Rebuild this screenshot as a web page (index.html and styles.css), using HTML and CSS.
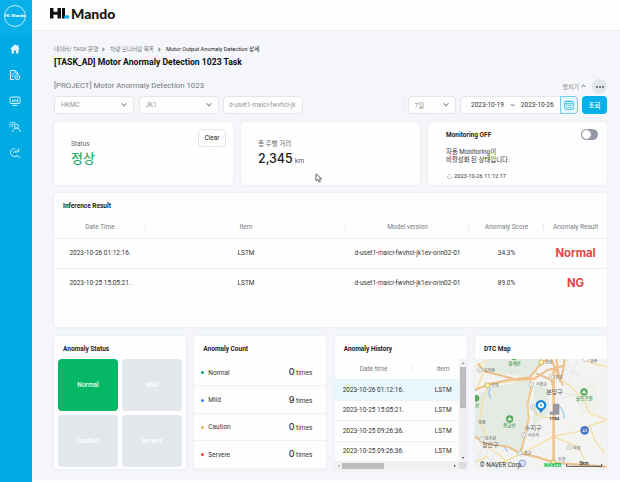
FILE: index.html
```html
<!DOCTYPE html>
<html lang="ko">
<head>
  <meta charset="UTF-8">
  <meta name="viewport" content="width=device-width, initial-scale=1.0">
  <title>HL Mando - Motor Anomaly Detection</title>
  <link rel="stylesheet" href="styles.css">
</head>
<body>
  <nav class="sidebar">
    <div class="side-logo"><span>HL Mando</span></div>
    <a class="side-item"><svg width="12" height="12" viewBox="0 0 12 12"><path d="M6 1.2 1 6h1.5v4.5h2.4V7.4h2.2v3.1h2.4V6H11L9.5 4.5V2H8.3v1.3z" fill="#e6f8ff"/></svg></a>
    <a class="side-item"><svg width="12" height="12" viewBox="0 0 12 12" fill="none" stroke="#d5f2fd" stroke-width="1"><path d="M5 10.5H1.5v-9h4.7L8.7 4v1M6 1.5V4h2.7M3 5h2M3 7h1.5"/><circle cx="8.3" cy="8.2" r="2.5"/><circle cx="8.3" cy="8.2" r=".7"/></svg></a>
    <a class="side-item"><svg width="12" height="12" viewBox="0 0 12 12" fill="none" stroke="#d5f2fd" stroke-width="1"><rect x="1" y="2" width="10" height="6.5" rx="1"/><path d="M3.5 7V5.2M5.2 7V4M7 7V5M8.6 7V3.8M3.7 10.4h4.6"/></svg></a>
    <a class="side-item"><svg width="12" height="12" viewBox="0 0 12 12" fill="none" stroke="#d5f2fd" stroke-width="1"><circle cx="7.4" cy="5.1" r="2"/><path d="M3.5 11c.3-2.3 1.7-3.7 3.9-3.7S11 8.7 11.4 11M.5 1.7h1M2.5 1.7h4M.5 3.5h1M2.5 3.5h2M.5 5.3h1M2.5 5.3h1.5"/></svg></a>
    <a class="side-item"><svg width="12" height="12" viewBox="0 0 12 12" fill="none" stroke="#d5f2fd" stroke-width="1"><path d="M6 1.700C3.500 1.200 1.500 3 1.500 5.500S3.500 9.500 5.800 9.500c1.200 0 2.200-.5 2.900-1.500M8.300 8l2.700 3M6 9.500h2M4.500 5.800V4.500M6.200 5.800V3.500M8 5.800V3.200M9.700 5V1.800"/></svg></a>
  </nav>
  <div class="page">
    <header class="header">
      <svg class="brand-mark" width="20" height="11" viewBox="0 0 20 11"><path d="M0 0h3.500v3.700h4V0H11v10.500H7.500V6.700h-4v3.800H0zM12 0h3v10.500h-3z" fill="#111"/><path d="M15 7.200h4.300v3.300H13.500z" fill="#12b5ea"/></svg>
      <span class="brand-name">Mando</span>
    </header>
    <main class="content">
      <div class="breadcrumb">
        <span class="crumb">데이터/ TASK 운영</span><i class="sep"></i><span class="crumb">차량 모니터링 목록</span><i class="sep"></i><span class="now">Motor Output Anomaly Detection 상세</span>
      </div>
      <h1>[TASK_AD] Motor Anormaly Detection 1023 Task</h1>
      <div class="project-row">
        <span class="project">[PROJECT] Motor Anormaly Detection 1023</span>
        <span class="fold">펼치기<i class="up"></i></span>
        <button class="more"><i></i><i></i><i></i></button>
      </div>
      <div class="filters">
        <div class="select">HKMC<i class="down"></i></div>
        <div class="select">JK1<i class="down"></i></div>
        <div class="select device">d-uset1-maici-fwvhcl-jk</div>
        <div class="divider"></div>
        <div class="select days">7일<i class="down"></i></div>
        <div class="dates">
          <span>2023-10-19</span><span>~</span><span>2023-10-26</span>
          <div class="calendar"><svg width="10" height="10" viewBox="0 0 10 10" fill="none" stroke="#23b5dc" stroke-width=".8"><rect x=".7" y="1.5" width="8.6" height="7.8" rx=".7"/><path d="M.7 3.7h8.6M2.7.3v2M5 .3v2M7.3.3v2"/><path d="M2.2 5.3h5.8M2.2 7.4h5.8" stroke-dasharray="1.2 .9" stroke-width="1"/></svg></div>
        </div>
        <button class="search">조회</button>
      </div>

      <section class="cards">
        <div class="card summary">
          <div class="label">Status</div>
          <div class="status">정상</div>
          <button class="clear">Clear</button>
        </div>
        <div class="card summary">
          <div class="label">총 주행 거리</div>
          <div class="distance">2,345<small>km</small></div>
        </div>
        <div class="card monitoring">
          <div class="monitor-head"><b>Monitoring OFF</b><span class="toggle"></span></div>
          <p>자동 Monitoring이<br>비활성화 된 상태입니다.</p>
          <div class="updated"><svg width="5" height="5" viewBox="0 0 5 5"><path d="M3.8 1A2 2 0 1 0 4.5 2.5" fill="none" stroke="#999" stroke-width=".6"/></svg>2023-10-26 11:12:17</div>
        </div>
      </section>

      <section class="card inference">
        <h2>Inference Result</h2>
        <table>
          <colgroup><col class="c-date"><col class="c-item"><col class="c-model"><col class="c-score"><col class="c-result"></colgroup>
          <thead>
            <tr><th>Date Time</th><th>Item</th><th>Model version</th><th>Anomaly Score</th><th>Anomaly Result</th></tr>
          </thead>
          <tbody>
            <tr><td>2023-10-26 01:12:16.</td><td>LSTM</td><td>d-uset1-maici-fwvhcl-jk1ev-orin02-01</td><td>34.3%</td><td class="result">Normal</td></tr>
            <tr><td>2023-10-25 15:05:21.</td><td>LSTM</td><td>d-uset1-maici-fwvhcl-jk1ev-orin02-01</td><td>89.0%</td><td class="result">NG</td></tr>
          </tbody>
        </table>
      </section>

      <section class="panels">
        <div class="card">
          <h2>Anomaly Status</h2>
          <div class="tiles">
            <div class="tile on">Normal</div>
            <div class="tile">Mild</div>
            <div class="tile">Caution</div>
            <div class="tile">Servere</div>
          </div>
        </div>
        <div class="card">
          <h2>Anomaly Count</h2>
          <ul class="counts">
            <li><i class="dot green"></i>Normal<span><b>0</b> times</span></li>
            <li><i class="dot blue"></i>Mild<span><b>9</b> times</span></li>
            <li><i class="dot orange"></i>Caution<span><b>0</b> times</span></li>
            <li><i class="dot red"></i>Servere<span><b>0</b> times</span></li>
          </ul>
        </div>
        <div class="card">
          <h2>Anomaly History</h2>
          <div class="history">
            <div class="history-list">
              <div class="history-row head"><span>Date time</span><span>item</span></div>
              <div class="history-row active"><span>2023-10-26 01:12:16.</span><span>LSTM</span></div>
              <div class="history-row"><span>2023-10-25 15:05:21.</span><span>LSTM</span></div>
              <div class="history-row"><span>2023-10-25 09:26:36.</span><span>LSTM</span></div>
              <div class="history-row"><span>2023-10-25 09:26:36.</span><span>LSTM</span></div>
            </div>
            <div class="vbar"><i class="arrow-up"></i><i class="thumb"></i><i class="arrow-down"></i></div>
            <div class="hbar"><i class="arrow-left"></i><i class="thumb"></i><i class="arrow-right"></i></div>
            <div class="corner"></div>
          </div>
        </div>
        <div class="card">
          <h2>DTC Map</h2>
          <svg class="map" viewBox="21 87 396 330" preserveAspectRatio="none">
            <rect x="21" y="87" width="396" height="330" fill="#f3f3f1"/>
            <!-- green areas -->
            <g fill="#e3ebe3">
              <path d="M55 87H215L205 130 185 140 90 130 45 115z"/>
              <path d="M60 175 180 150 190 180 175 240 180 310 160 370 100 345 50 330 21 325V200z"/>
              <path d="M197 170 235 165 245 225 240 250 195 290z"/>
              <path d="M300 160 375 155 400 230 345 255 320 205z" fill="#eff2ec"/>
            </g>
            <g fill="none" stroke="#e2e2df" stroke-width="2">
              <path d="M285 95l50 40M300 87l-20 60M330 90l-35 80M280 115l55 20M21 365l70 35M40 355l-15 50M60 360l-20 50M80 370l-20 40M275 190l50 5M280 205l40-10M190 360l50 40M210 350l40 50"/>
            </g>
            <g fill="none" stroke="#9dcdea" stroke-width="4">
              <path d="M68 172l-6 16 6 18M105 345l14 20M197 240l10 12M270 225q20 15 18 40M75 400l12 14"/>
            </g>
            <g fill="none" stroke="#f4e0a4" stroke-width="4">
              <path d="M21 110 60 90M45 130 30 170 21 175M62 165 45 210 35 270 50 310 35 340M60 163 150 152 205 148"/>
              <path d="M285 150 345 205 365 250 417 268M345 87 380 102 417 110M417 270 370 285 330 305 260 318 190 355 130 385 95 400M195 235 205 255 235 262 258 265"/>
              <path d="M50 345 95 375 120 400M365 285 380 330 410 370M258 320 330 350 350 390M21 395 60 380"/>
            </g>
            <g fill="none" stroke="#ecbf8c" stroke-width="6">
              <path d="M30 100 50 125 85 133 150 150 200 145 240 120 285 108"/>
              <path d="M21 180 60 163 120 150 185 142 220 100 240 87"/>
              <path d="M185 140 190 175 178 225 182 265 170 315 163 350 155 370"/>
              <path d="M250 87 268 130 285 165M265 87 275 150M290 87 285 120 275 155"/>
              <path d="M257 115V400" stroke-width="8"/>
              <path d="M21 320 50 340 80 345 120 350 155 370 210 382 260 398 350 405 417 410"/>
              <path d="M205 130 250 150 257 175"/>
            </g>
            <path d="M257 115V400M185 140 190 175 178 225 182 265 170 315 163 350" fill="none" stroke="#f8d7a4" stroke-width="2"/>
            <!-- interchanges -->
            <g fill="#fff" stroke="#aaa" stroke-width="2">
              <circle cx="35" cy="120" r="7"/><circle cx="191" cy="164" r="7"/><circle cx="250" cy="141" r="7"/><circle cx="193" cy="231" r="7"/><circle cx="167" cy="315" r="7"/><circle cx="156" cy="369" r="7"/><circle cx="304" cy="352" r="7"/><circle cx="42" cy="328" r="7"/><circle cx="353" cy="88" r="7"/>
            </g>
            <path d="M37 117l-4 3 4 3M193 161l-4 3 4 3M252 138l-4 3 4 3M195 228l-4 3 4 3M169 312l-4 3 4 3M158 366l-4 3 4 3M306 349l-4 3 4 3M44 325l-4 3 4 3" fill="none" stroke="#888" stroke-width="1.5"/>
            <g fill="#fff1a8" stroke="#ad9c45" stroke-width="2"><circle cx="220" cy="97" r="8"/><circle cx="58" cy="166" r="8"/><circle cx="256" cy="397" r="7"/></g>
            <g fill="#59ad5d"><circle cx="125" cy="267" r="11"/><circle cx="348" cy="186" r="11"/><circle cx="24" cy="205" r="10"/><circle cx="138" cy="83" r="8"/></g>
            <path d="M118 271l7-10 7 10zM341 190l7-10 7 10z" fill="#fff"/>
            <circle cx="350" cy="301" r="13" fill="#4b76ca"/><circle cx="163" cy="400" r="10" fill="#dae0ff" stroke="#8c99cc" stroke-width="3"/>
            <path d="M255 221h19v33h-29v-9h10z" fill="#9999a3"/>
            <g class="map-text">
              <text x="48" y="125">북의왕</text><text x="70" y="171">학의</text><text x="232" y="103">금토</text><text x="262" y="147">판교</text><text x="204" y="169">서판교</text><text x="31" y="281">의왕</text><text x="51" y="331">북수원</text><text x="180" y="321">서수지</text><text x="168" y="375">광교</text><text x="316" y="359">마북</text><text x="366" y="99">광주</text><text x="270" y="394">신갈</text>
            </g>
            <g class="map-green"><text x="121" y="106">청계산</text><text x="105" y="292">광교산</text><text x="324" y="211">율동공원</text><text x="21" y="230">산</text></g>
            <g class="map-city"><text x="235" y="192">분당구</text><text x="171" y="301">수지구</text><text x="42" y="350">장안구</text></g>
            <text x="350" y="306" class="route">43</text>
            <path d="M219 251C215 239 203 236 203 226a16 16 0 0 1 32 0c0 10-12 13-16 25z" fill="#1885d6"/><circle cx="219" cy="226" r="9" fill="#fff"/><circle cx="219" cy="226" r="3" fill="#1885d6"/>
            <text x="244" y="271" class="map-num">1784</text>
            <text x="35" y="411" class="copyright">© NAVER Corp.</text>
            <text x="228" y="410" class="naver">NAVER</text>
            <path d="M296 402v7h105v-7" fill="none" stroke="#333" stroke-width="2.5"/>
            <text x="334" y="405" class="scale">5km</text>
          </svg>
        </div>
      </section>
    </main>
  </div>
  <svg class="cursor" width="8" height="10" viewBox="0 0 8 10"><path d="M1 .8v7l1.7-1.5L4 9l1.5-.6-1.2-2.6h2.3z" fill="#fff" stroke="#555" stroke-width=".9"/></svg>
</body>
</html>
```

FILE: styles.css
```css
* {
  box-sizing: border-box;
}
body {
  margin: 0;
  width: 620px;
  height: 482px;
  overflow: hidden;
  display: flex;
  background: #f4f6f9;
  font-family: Roboto, 'Noto Sans CJK KR', sans-serif;
  font-size: 6.5px;
  color: #333;
}
button {
  font-family: inherit;
  padding: 0;
  border: none;
}
.sidebar {
  width: 32px;
  height: 482px;
  background: #00aae3;
  flex: none;
}
.side-logo {
  height: 36px;
  background: #08b0ea;
  display: flex;
  padding: 5px 0 0 4px;
}
.side-logo span {
  width: 22px;
  height: 22px;
  border: 1px solid #bdeaff;
  border-radius: 50%;
  color: #fff;
  font-size: 4.4px;
  font-weight: 700;
  line-height: 20px;
  text-align: center;
  white-space: nowrap;
}
.side-item {
  height: 26px;
  display: flex;
  align-items: center;
  justify-content: center;
  padding-right: 2px;
}
.page {
  flex: 1;
  min-width: 0;
  height: 482px;
  border-bottom: 2px solid #fefefe;
}
.header {
  height: 31px;
  background: #fefefe;
  border-bottom: 1px solid #eceef1;
  display: flex;
  align-items: center;
  padding: 0 0 3px 18px;
}
.brand-name {
  margin-left: 1px;
  font-family: Lato, sans-serif;
  font-weight: 900;
  font-size: 14px;
  line-height: 14px;
  color: #151515;
}
.content {
  width: 575px;
  padding: 13px 0 0 22px;
}
.breadcrumb {
  display: flex;
  align-items: center;
  height: 10px;
  font-size: 5.6px;
  color: #777;
  white-space: nowrap;
}
.crumb {
  width: 46px;
}
.sep {
  width: 3px;
  height: 3px;
  margin: 0 6px 0 1px;
  border: solid #777;
  border-width: 1px 1px 0 0;
  transform: rotate(45deg);
}
.now {
  color: #222;
}
h1 {
  margin: 2px 0 0;
  height: 13px;
  line-height: 13px;
  font-size: 8.65px;
  font-weight: 700;
  color: #111;
}
.project-row {
  display: flex;
  align-items: center;
  height: 15px;
  margin-top: 10px;
}
.project {
  font-size: 7.8px;
  padding-bottom: 2px;
  color: #74777b;
}
.fold {
  margin-left: auto;
  font-size: 6px;
  color: #888;
  display: flex;
  align-items: center;
}
.up, .down {
  width: 4px;
  height: 4px;
  border: solid #858b93;
  border-width: 0 1px 1px 0;
  transform: rotate(45deg) translate(-1px, -1px);
}
.up {
  width: 3px;
  height: 3px;
  margin-left: 3px;
  transform: rotate(225deg);
}
.more {
  width: 15px;
  height: 15px;
  border-radius: 50%;
  background: #e2e5ea;
  margin-left: 7px;
  display: flex;
  align-items: center;
  justify-content: center;
  gap: 1px;
}
.more i {
  width: 2px;
  height: 2px;
  border-radius: 50%;
  background: #555a61;
}
.filters {
  display: flex;
  margin-top: 2px;
  height: 18px;
}
.select {
  width: 80px;
  margin-right: 4.5px;
  height: 18px;
  border: 1px solid #e3e6ea;
  border-radius: 4px;
  background: #fefefe;
  color: #92969c;
  display: flex;
  align-items: center;
  justify-content: space-between;
  padding: 0 7px 0 6px;
  white-space: nowrap;
}
.select.device {
  padding-left: 5px;
  overflow: hidden;
}
.divider {
  width: 1px;
  margin-left: auto;
  margin-right: 3px;
  background: #eceef2;
}
.days {
  width: 48px;
}
.dates {
  width: 118px;
  height: 18px;
  border: 1px solid #e3e6ea;
  border-radius: 4px;
  background: #fefefe;
  display: flex;
  align-items: center;
  justify-content: space-between;
  padding-left: 10px;
}
.dates span:nth-child(3) {
  margin-right: 1px;
}
.calendar {
  width: 18px;
  height: 18px;
  margin-right: -1px;
  margin-left: -1px;
  border: 1px solid #70cfe9;
  border-radius: 0 4px 4px 0;
  background: #e5f7fb;
  display: flex;
  align-items: center;
  justify-content: center;
}
.search {
  width: 25px;
  height: 18px;
  margin-left: 4px;
  background: #06b1e9;
  border-radius: 4px;
  color: #fff;
  font-size: 6.5px;
  font-weight: 500;
}
.card {
  background: #fefefe;
  border-radius: 4px;
  box-shadow: 0 0 3px rgba(170, 195, 220, .22);
}
.cards {
  display: grid;
  grid-template-columns: repeat(3, 179px);
  gap: 8px;
  margin-top: 8px;
}
.cards .card {
  height: 63px;
}
.summary {
  position: relative;
  padding: 18px 17px 0;
}
.label {
  height: 9px;
  line-height: 9px;
  color: #666;
}
.status {
  font-size: 13px;
  line-height: 20px;
  font-weight: 500;
  color: #2fae70;
}
.clear {
  position: absolute;
  top: 7px;
  right: 7px;
  width: 28px;
  height: 18px;
  border: 1px solid #e2e5ea;
  border-radius: 4px;
  background: #fefefe;
  font-size: 6.5px;
  color: #222;
}
.distance {
  display: flex;
  align-items: baseline;
  gap: 2px;
  font-family: Inter, sans-serif;
  font-size: 12.4px;
  line-height: 20px;
  font-weight: 500;
  color: #222;
}
.distance small {
  font-size: 6.8px;
  font-weight: 400;
  color: #65516e;
}
.monitoring {
  padding: 6px 9px 0 18px;
}
.monitor-head {
  display: flex;
  align-items: center;
  justify-content: space-between;
  height: 13px;
}
.monitor-head b {
  color: #222;
}
.toggle {
  width: 17px;
  height: 11px;
  border-radius: 6px;
  background: radial-gradient(circle at 5.5px 5.5px, #fff 4px, #9299a4 4.7px);
}
.monitoring p {
  margin: 7px 0 0;
  line-height: 8px;
  font-size: 6.4px;
}
.updated {
  display: flex;
  align-items: center;
  gap: 2px;
  margin-top: 8px;
  font-size: 5.7px;
  line-height: 8px;
  padding-left: 1px;
}
h2 {
  margin: 0;
  padding: 9px 0 0 9px;
  height: 23px;
  font-size: 6.5px;
  line-height: 8px;
  font-weight: 700;
  color: #222;
}
.inference {
  height: 134px;
  margin-top: 8px;
}
table {
  width: 100%;
  table-layout: fixed;
  border-collapse: collapse;
}
.c-date { width: 92px; }
.c-item { width: 200px; }
.c-model { width: 123px; }
.c-score { width: 75px; }
.c-result { width: 63px; }
th, td {
  padding: 0;
  text-align: center;
  white-space: nowrap;
}
th {
  height: 22px;
  font-weight: 400;
  color: #777c82;
  border-bottom: 1px solid #eaecf3;
  background: linear-gradient(#e9ebef, #e9ebef) right 8px / 1px 6px no-repeat;
}
th:last-child {
  background: none;
}
td {
  height: 30px;
  padding-bottom: 1px;
  border-bottom: 1px solid #eef0f3;
}
tr:last-child td {
  border-bottom: none;
}
.result {
  font-family: Inter, sans-serif;
  font-size: 11.3px;
  font-weight: 700;
  color: #df4548;
}
.panels {
  display: grid;
  grid-template-columns: repeat(4, 132px);
  justify-content: space-between;
  margin-top: 9px;
}
.panels .card {
  height: 133px;
  overflow: hidden;
}
.tiles {
  display: grid;
  grid-template-columns: 60px 60px;
  grid-auto-rows: 52px;
  gap: 4px;
  padding-left: 4px;
}
.tile {
  border-radius: 4px;
  background: #e3e6eb;
  color: #fff;
  font-weight: 500;
  display: flex;
  align-items: center;
  justify-content: center;
}
.tile.on {
  background: #06b765;
  color: #e8fff3;
}
.counts {
  list-style: none;
  margin: 0;
  padding: 0;
}
.counts li {
  height: 27.4px;
  display: flex;
  align-items: center;
  padding: 1px 14px 0 7px;
  border-bottom: 1px solid #eff1f4;
}
.counts span {
  margin-left: auto;
  padding-bottom: 2px;
}
.counts b {
  font-family: Inter, sans-serif;
  font-size: 9px;
  font-weight: 500;
}
.dot {
  width: 3px;
  height: 3px;
  border-radius: 50%;
  margin-right: 4px;
}
.green { background: #0bad60; }
.blue { background: #3e82ec; }
.orange { background: #edb258; }
.red { background: #ee4545; }
.history {
  display: grid;
  grid-template-columns: 124px 8px;
  grid-template-rows: 103px 7px;
}
.history-list {
  overflow: hidden;
}
.history-row {
  height: 20.4px;
  display: grid;
  grid-template-columns: 78px 46px;
  align-items: center;
  border-bottom: 1px solid #eef0f3;
}
.history-row span:first-child {
  padding-left: 8px;
}
.history-row span:last-child {
  padding-left: 22px;
}
.history-row.head {
  height: 21.4px;
  color: #777c82;
}
.history-row.head span:first-child {
  padding-left: 25px;
  border-right: 1px solid #eceef1;
}
.history-row.head span:last-child {
  padding-left: 24px;
}
.active {
  background: #e8f7fd;
}
.vbar, .hbar {
  background: #f0f0f0;
  display: flex;
  align-items: center;
}
.vbar {
  flex-direction: column;
  padding: 3px 0;
}
.vbar .thumb {
  width: 6px;
  height: 41px;
  margin-top: 3px;
  margin-bottom: auto;
  background: #bdbdbd;
}
.hbar {
  padding: 0 3px;
}
.hbar .thumb {
  width: 42px;
  height: 6px;
  margin-left: 2px;
  margin-right: auto;
  background: #bdbdbd;
}
.corner {
  background: #dcdcdc;
}
.arrow-up, .arrow-down, .arrow-left, .arrow-right {
  border: 1.5px solid transparent;
}
.arrow-up {
  border-top: none;
  border-bottom: 2px solid #777;
}
.arrow-down {
  border-bottom: none;
  border-top: 2px solid #333;
}
.arrow-left {
  border-left: none;
  border-right: 2px solid #999;
}
.arrow-right {
  border-right: none;
  border-left: 2px solid #333;
}
.map {
  display: block;
  width: 132px;
  height: 110px;
}
.map-text {
  font-size: 12px;
  fill: #555;
}
.map-green {
  font-size: 13.5px;
  font-weight: 500;
  fill: #3d9448;
}
.map-city {
  font-size: 18px;
  fill: #555;
}
.route {
  font-size: 13px;
  fill: #fff;
  text-anchor: middle;
}
.map-num {
  font-size: 13px;
  font-weight: 700;
  fill: #333;
}
.copyright {
  font-size: 19px;
  fill: #333;
}
.naver {
  font-size: 16px;
  font-weight: 900;
  fill: #07c35a;
}
.scale {
  font-size: 14px;
  font-weight: 500;
  fill: #222;
}
.cursor {
  position: absolute;
  left: 315px;
  top: 173px;
}
```
